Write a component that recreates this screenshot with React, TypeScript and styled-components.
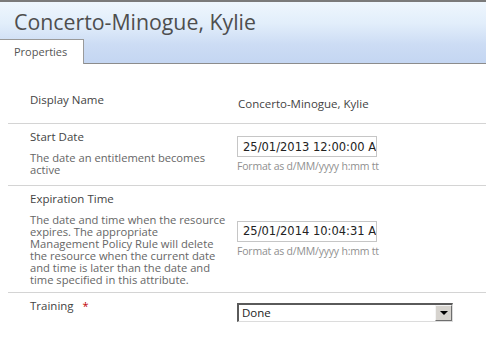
import React from 'react';
import styled, { createGlobalStyle } from 'styled-components';

const GlobalStyle = createGlobalStyle`
  html, body {
    margin: 0;
    padding: 0;
    background: #ffffff;
  }
  body {
    font-family: 'Open Sans', 'Liberation Sans', sans-serif;
    color: #444;
  }
`;

const Page = styled.div`
  width: 486px;
  height: 337px;
  overflow: hidden;
  background: #fff;
`;

const Header = styled.header`
  height: 61px;
  border-top: 2px solid #7a7a7a;
  border-bottom: 1px solid #8c8c8c;
  background: linear-gradient(to bottom, #eef6fd 0%, #e2eefb 35%, #ccdcf4 70%, #c4d6f2 100%);
  display: flex;
  flex-direction: column;
  justify-content: space-between;
`;

const Title = styled.h1`
  margin: 0;
  padding: 5px 0 0 14px;
  font-size: 21.3px;
  font-weight: 400;
  line-height: 30px;
  color: #4e4e4e;
`;

const TabStrip = styled.div`
  display: flex;
  align-items: flex-end;
  height: 24px;
  margin-bottom: -1px;
`;

const Tab = styled.div`
  width: 69px;
  height: 24px;
  padding-left: 14px;
  background: #fff;
  border-top: 1px solid #9a9a9a;
  border-right: 1px solid #9a9a9a;
  font-size: 11px;
  line-height: 24px;
  color: #555;
`;

const Form = styled.div`
  margin-top: 23px;
  padding-left: 8px;
`;

const Row = styled.div<{ $last?: boolean }>`
  display: grid;
  grid-template-columns: 229px 1fr;
  border-bottom: ${({ $last }) => ($last ? 'none' : '1px solid #d4d4d4')};
  min-height: ${({ $last }) => ($last ? '38px' : '0')};
`;

const LabelCell = styled.div<{ $pad?: number }>`
  padding: 6px 4px ${({ $pad }) => $pad ?? 8}px 22px;
`;

const Label = styled.div`
  font-size: 11.5px;
  line-height: 14px;
  color: #444;
`;

const Required = styled.span`
  color: #c00000;
  margin-left: 9px;
  font-size: 11px;
`;

const Description = styled.div`
  margin-top: 8px;
  font-size: 11.2px;
  line-height: 12px;
  color: #666;
`;

const DescLine = styled.span`
  display: block;
  white-space: nowrap;
`;

const FieldCell = styled.div`
  display: flex;
  flex-direction: column;
  justify-content: center;
  gap: 3px;
`;

const Value = styled.div`
  font-size: 11.5px;
  color: #444;
  padding: 0 0 3px 1px;
`;

const DateInput = styled.input`
  box-sizing: border-box;
  width: 140px;
  height: 21px;
  margin: 0;
  padding: 0 0 0 5px;
  border: 1px solid #c6c6c6;
  font-family: 'DejaVu Sans', Verdana, sans-serif;
  font-size: 11.5px;
  color: #222;
  background: #fff;
  outline: none;
`;

const Hint = styled.div`
  font-size: 10.5px;
  line-height: 13px;
  color: #8f8f8f;
  letter-spacing: -0.2px;
`;

const SelectBox = styled.div`
  box-sizing: border-box;
  width: 216px;
  height: 19px;
  display: flex;
  align-items: center;
  justify-content: space-between;
  border-top: 2px solid #5a5a5a;
  border-left: 2px solid #5a5a5a;
  border-right: 1px solid #dcdcdc;
  border-bottom: 1px solid #dcdcdc;
  background: #fff;
  font-size: 11.5px;
  color: #222;
  padding-left: 3px;
`;

const SelectButton = styled.span`
  box-sizing: border-box;
  width: 17px;
  height: 16px;
  display: flex;
  align-items: center;
  justify-content: center;
  background: #d6d3ce;
  border-top: 1px solid #f4f4f4;
  border-left: 1px solid #f4f4f4;
  border-right: 1px solid #6e6e6e;
  border-bottom: 1px solid #6e6e6e;

  &::after {
    content: '';
    width: 0;
    height: 0;
    border-left: 4px solid transparent;
    border-right: 4px solid transparent;
    border-top: 4px solid #000;
  }
`;

const startDesc = ['The date an entitlement becomes', 'active'];

const expiryDesc = [
  'The date and time when the resource',
  'expires. The appropriate',
  'Management Policy Rule will delete',
  'the resource when the current date',
  'and time is later than the date and',
  'time specified in this attribute.',
];

const App: React.FC = () => {
  return (
    <Page>
      <GlobalStyle />
      <Header>
        <Title>Concerto-Minogue, Kylie</Title>
        <TabStrip>
          <Tab>Properties</Tab>
        </TabStrip>
      </Header>

      <Form>
        <Row>
          <LabelCell $pad={16}>
            <Label>Display Name</Label>
          </LabelCell>
          <FieldCell>
            <Value>Concerto-Minogue, Kylie</Value>
          </FieldCell>
        </Row>

        <Row>
          <LabelCell $pad={9}>
            <Label>Start Date</Label>
            <Description>
              {startDesc.map((line) => (
                <DescLine key={line}>{line}</DescLine>
              ))}
            </Description>
          </LabelCell>
          <FieldCell>
            <DateInput readOnly value="25/01/2013 12:00:00 AM" />
            <Hint>Format as d/MM/yyyy h:mm tt</Hint>
          </FieldCell>
        </Row>

        <Row>
          <LabelCell $pad={6}>
            <Label>Expiration Time</Label>
            <Description>
              {expiryDesc.map((line) => (
                <DescLine key={line}>{line}</DescLine>
              ))}
            </Description>
          </LabelCell>
          <FieldCell>
            <DateInput readOnly value="25/01/2014 10:04:31 AM" />
            <Hint>Format as d/MM/yyyy h:mm tt</Hint>
          </FieldCell>
        </Row>

        <Row $last>
          <LabelCell>
            <Label>
              Training<Required>*</Required>
            </Label>
          </LabelCell>
          <FieldCell>
            <SelectBox>
              Done
              <SelectButton />
            </SelectBox>
          </FieldCell>
        </Row>
      </Form>
    </Page>
  );
};

export default App;
